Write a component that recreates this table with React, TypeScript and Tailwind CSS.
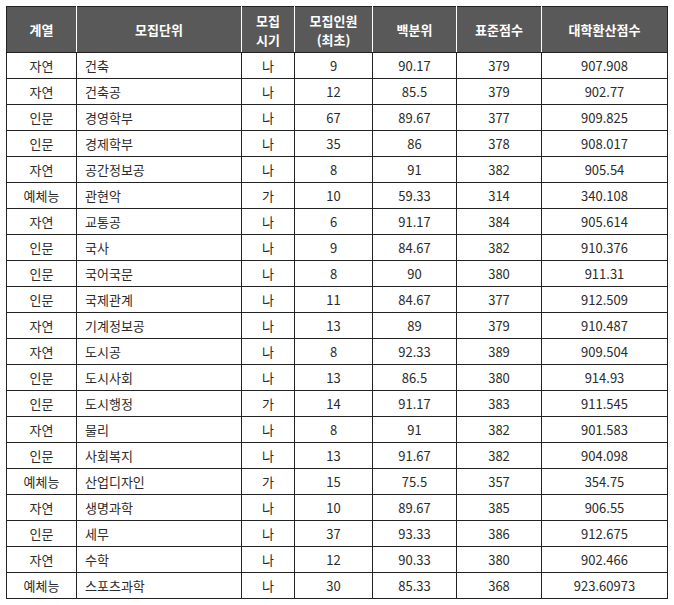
import React from "react";

const rows: [string, string, string, string, string, string, string][] = [
  ["자연", "건축", "나", "9", "90.17", "379", "907.908"],
  ["자연", "건축공", "나", "12", "85.5", "379", "902.77"],
  ["인문", "경영학부", "나", "67", "89.67", "377", "909.825"],
  ["인문", "경제학부", "나", "35", "86", "378", "908.017"],
  ["자연", "공간정보공", "나", "8", "91", "382", "905.54"],
  ["예체능", "관현악", "가", "10", "59.33", "314", "340.108"],
  ["자연", "교통공", "나", "6", "91.17", "384", "905.614"],
  ["인문", "국사", "나", "9", "84.67", "382", "910.376"],
  ["인문", "국어국문", "나", "8", "90", "380", "911.31"],
  ["인문", "국제관계", "나", "11", "84.67", "377", "912.509"],
  ["자연", "기계정보공", "나", "13", "89", "379", "910.487"],
  ["자연", "도시공", "나", "8", "92.33", "389", "909.504"],
  ["인문", "도시사회", "나", "13", "86.5", "380", "914.93"],
  ["인문", "도시행정", "가", "14", "91.17", "383", "911.545"],
  ["자연", "물리", "나", "8", "91", "382", "901.583"],
  ["인문", "사회복지", "나", "13", "91.67", "382", "904.098"],
  ["예체능", "산업디자인", "가", "15", "75.5", "357", "354.75"],
  ["자연", "생명과학", "나", "10", "89.67", "385", "906.55"],
  ["인문", "세무", "나", "37", "93.33", "386", "912.675"],
  ["자연", "수학", "나", "12", "90.33", "380", "902.466"],
  ["예체능", "스포츠과학", "나", "30", "85.33", "368", "923.60973"],
];

const th =
  "bg-[#595959] text-white font-bold text-[13px] leading-[19px] text-center align-middle border-l border-l-white first:border-l-[#222] last:border-r-[#222] border-t border-t-[#222] border-b border-b-[#222] border-r border-r-white p-0";
const td =
  "border border-[#222] text-[13px] leading-[17px] text-[#2b2b2b] text-center align-middle p-0";

export default function App() {
  return (
    <div
      className="bg-white w-[674px] h-[605px] pt-[6px] pl-[6px]"
      style={{ fontFamily: '"Malgun Gothic", "Noto Sans CJK KR", "Noto Sans", sans-serif' }}
    >
      <table className="border-collapse table-fixed w-[661px]">
        <colgroup>
          <col className="w-[70px]" />
          <col className="w-[165px]" />
          <col className="w-[53px]" />
          <col className="w-[78px]" />
          <col className="w-[84px]" />
          <col className="w-[85px]" />
          <col className="w-[126px]" />
        </colgroup>
        <thead>
          <tr className="h-[46px]">
            <th className={th}>계열</th>
            <th className={th}>모집단위</th>
            <th className={th}>
              모집
              <br />
              시기
            </th>
            <th className={th}>
              모집인원
              <br />
              (최초)
            </th>
            <th className={th}>백분위</th>
            <th className={th}>표준점수</th>
            <th className={th}>대학환산점수</th>
          </tr>
        </thead>
        <tbody>
          {rows.map((r, i) => (
            <tr key={i} className="h-[26px]">
              <td className={td}>{r[0]}</td>
              <td className={td + " !text-left pl-[8px]"}>{r[1]}</td>
              <td className={td}>{r[2]}</td>
              <td className={td}>{r[3]}</td>
              <td className={td}>{r[4]}</td>
              <td className={td}>{r[5]}</td>
              <td className={td}>{r[6]}</td>
            </tr>
          ))}
        </tbody>
      </table>
    </div>
  );
}
